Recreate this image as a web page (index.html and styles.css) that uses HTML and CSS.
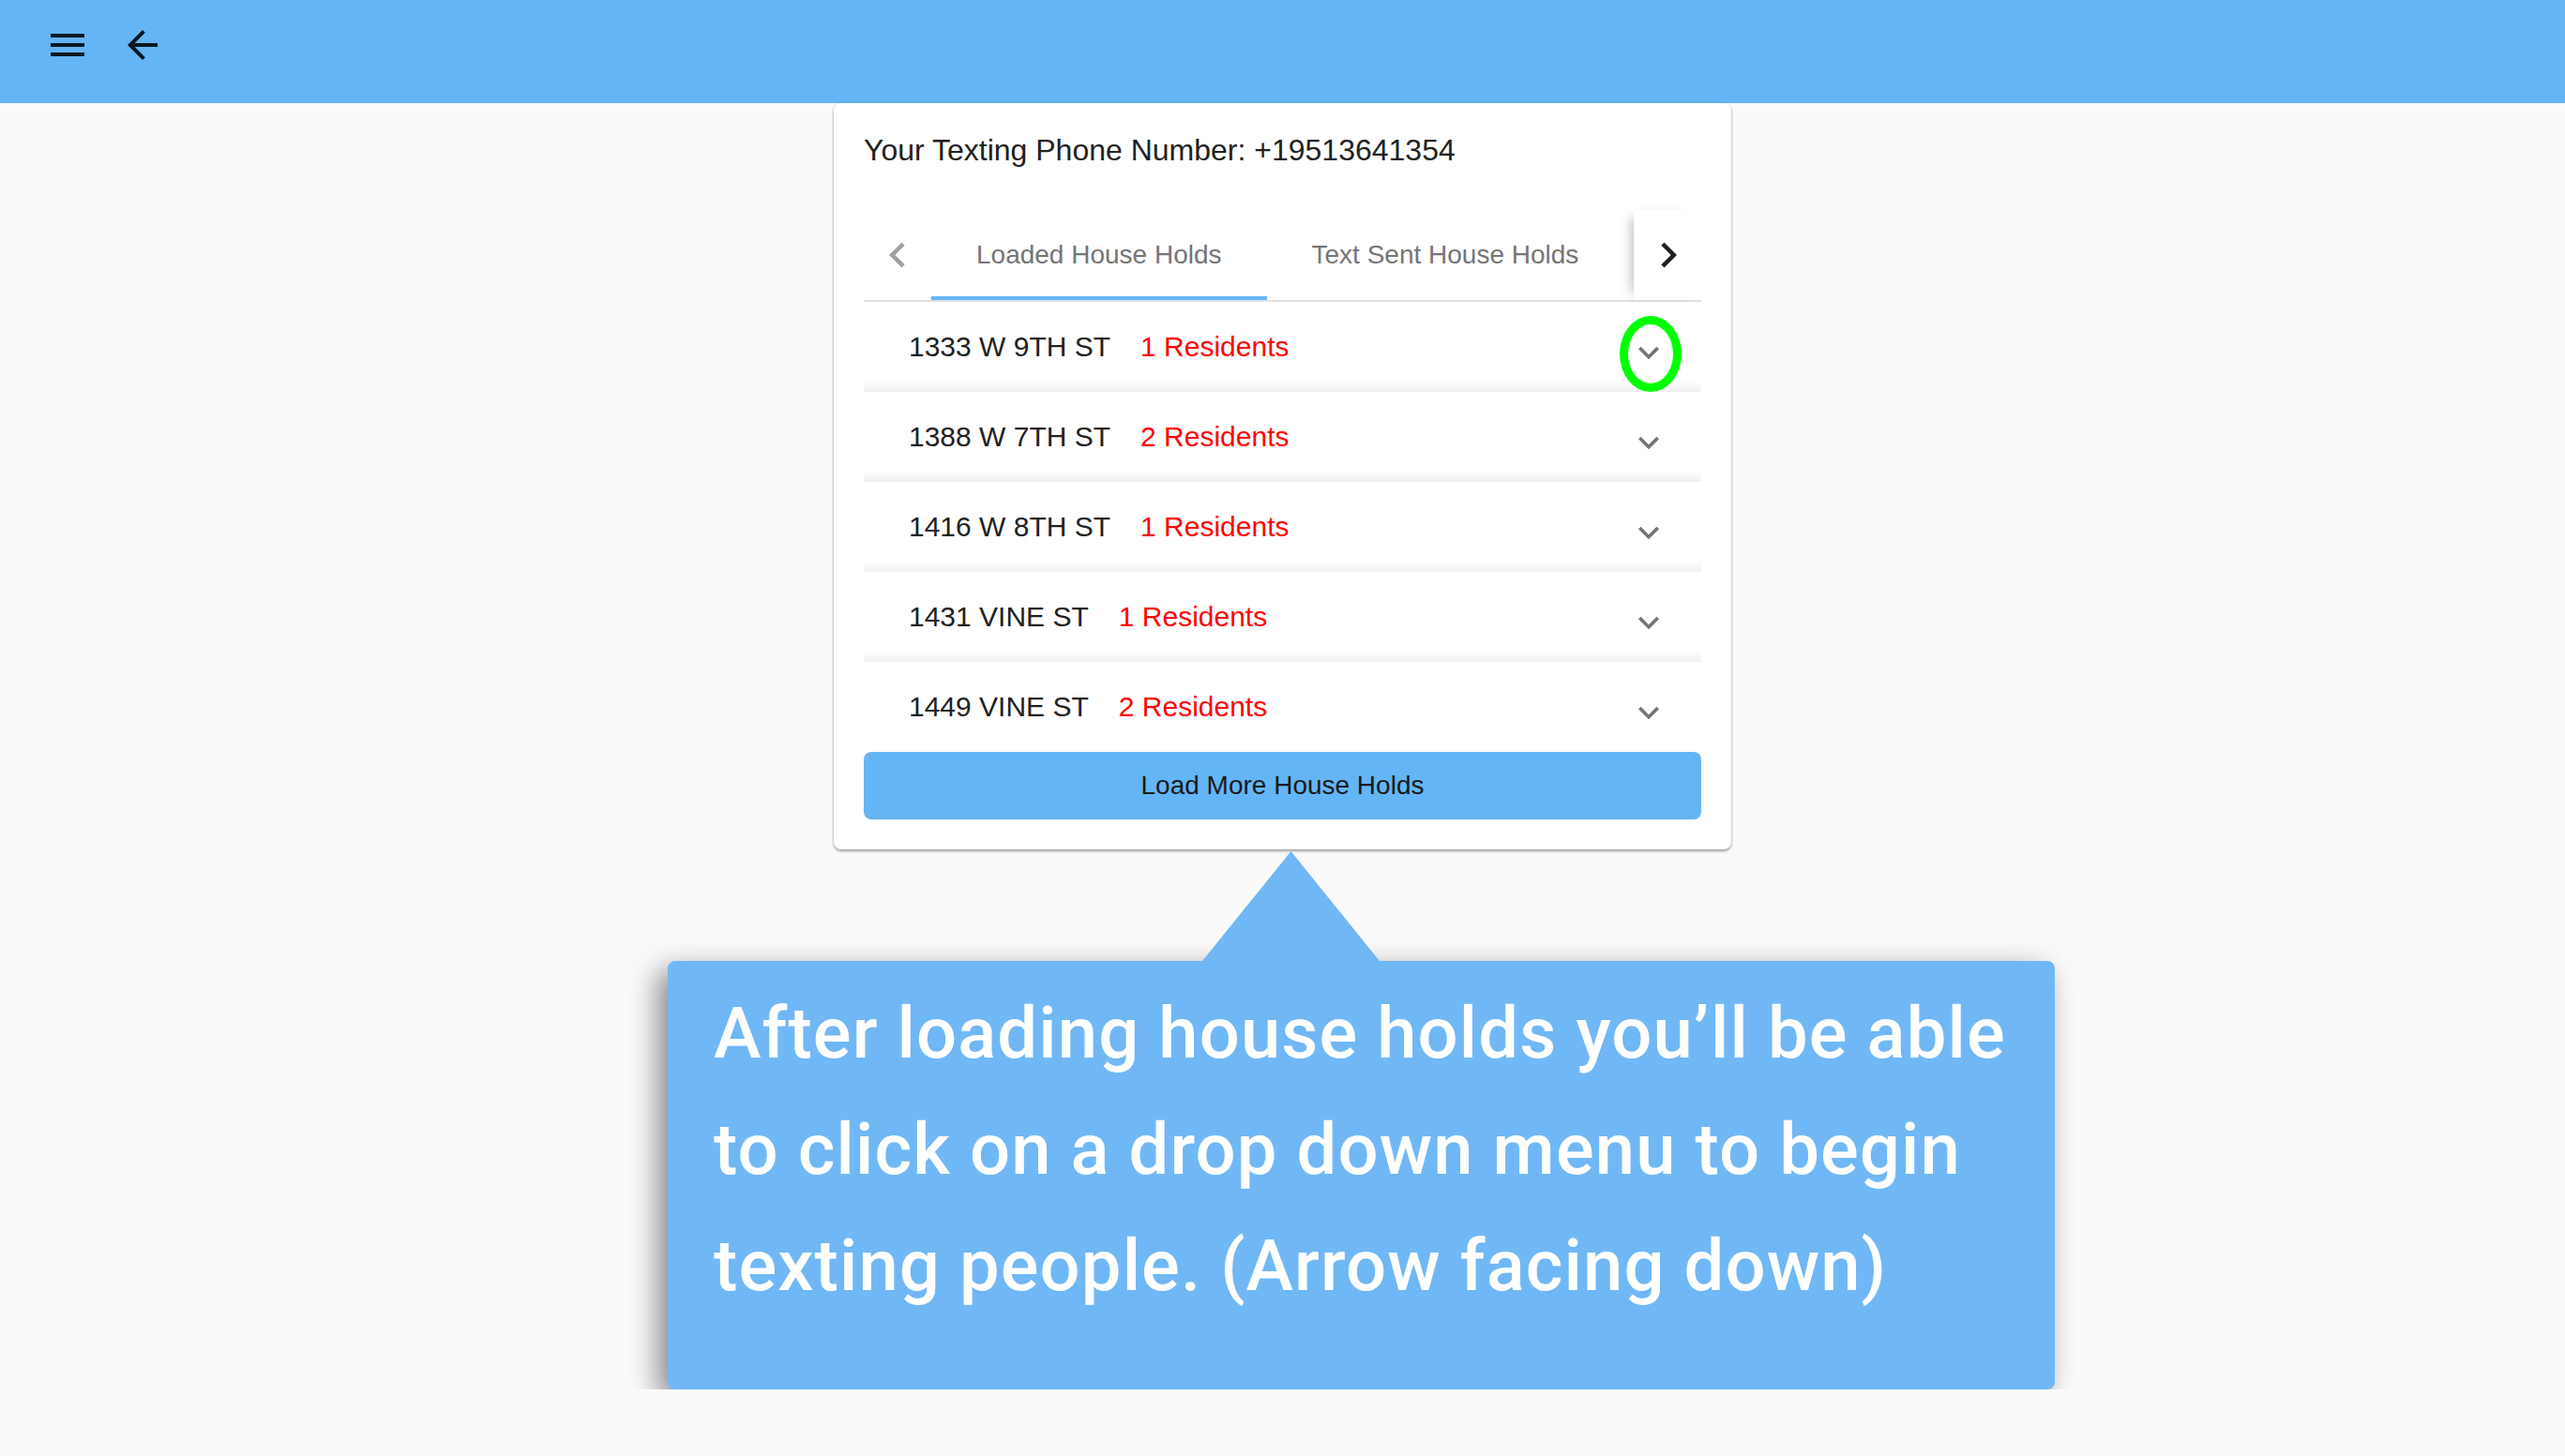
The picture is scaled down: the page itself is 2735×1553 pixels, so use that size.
FILE: index.html
```html
<!DOCTYPE html>
<html lang="en">
<head>
<meta charset="utf-8">
<title>Texting</title>
<link rel="stylesheet" href="styles.css">
</head>
<body>
<header class="appbar">
  <button class="icon-btn" aria-label="Menu">
    <svg viewBox="0 0 24 24"><path d="M3 18h18v-2H3v2zm0-5h18v-2H3v2zm0-7v2h18V6H3z"/></svg>
  </button>
  <button class="icon-btn" aria-label="Back">
    <svg viewBox="0 0 24 24"><path d="M20 11H7.83l5.59-5.59L12 4l-8 8 8 8 1.41-1.41L7.83 13H20v-2z"/></svg>
  </button>
</header>
<main class="page">
  <section class="card">
    <p class="phone">Your Texting Phone Number: +19513641354</p>
    <div class="tabs">
      <div class="scroll-btn disabled">
        <svg viewBox="0 0 24 24"><path d="M15.41 16.59L10.83 12l4.58-4.59L14 6l-6 6 6 6 1.41-1.41z"/></svg>
      </div>
      <div class="tab-list">
        <div class="tab active">Loaded House Holds</div>
        <div class="tab">Text Sent House Holds</div>
      </div>
      <div class="scroll-btn next">
        <svg viewBox="0 0 24 24"><path d="M10 6L8.59 7.41 13.17 12l-4.58 4.59L10 18l6-6z"/></svg>
      </div>
    </div>
    <ul class="households">
      <li class="household">
        <span class="address">1333 W 9TH ST</span><span class="residents">1 Residents</span>
        <span class="expand"><svg viewBox="0 0 24 24"><path d="M16.59 8.59L12 13.17 7.41 8.59 6 10l6 6 6-6z"/></svg><span class="highlight"></span></span>
      </li>
      <li class="household">
        <span class="address">1388 W 7TH ST</span><span class="residents">2 Residents</span>
        <span class="expand"><svg viewBox="0 0 24 24"><path d="M16.59 8.59L12 13.17 7.41 8.59 6 10l6 6 6-6z"/></svg></span>
      </li>
      <li class="household">
        <span class="address">1416 W 8TH ST</span><span class="residents">1 Residents</span>
        <span class="expand"><svg viewBox="0 0 24 24"><path d="M16.59 8.59L12 13.17 7.41 8.59 6 10l6 6 6-6z"/></svg></span>
      </li>
      <li class="household">
        <span class="address">1431 VINE ST</span><span class="residents">1 Residents</span>
        <span class="expand"><svg viewBox="0 0 24 24"><path d="M16.59 8.59L12 13.17 7.41 8.59 6 10l6 6 6-6z"/></svg></span>
      </li>
      <li class="household">
        <span class="address">1449 VINE ST</span><span class="residents">2 Residents</span>
        <span class="expand"><svg viewBox="0 0 24 24"><path d="M16.59 8.59L12 13.17 7.41 8.59 6 10l6 6 6-6z"/></svg></span>
      </li>
    </ul>
    <button class="load-more">Load More House Holds</button>
  </section>
  <aside class="callout">
    <p class="callout-text">After loading house holds you’ll be able<br>to click on a drop down menu to begin<br>texting people. (Arrow facing down)</p>
  </aside>
</main>
</body>
</html>
```
FILE: styles.css
```css
* {
  box-sizing: border-box;
}

body {
  margin: 0;
  background: #fafafa;
  font-family: "Liberation Sans", Arial, sans-serif;
  color: #212121;
}

.appbar {
  height: 110px;
  background: #64b5f6;
  display: flex;
  align-items: flex-start;
  gap: 32px;
  padding: 24px 0 0 48px;
}

.icon-btn {
  width: 48px;
  height: 48px;
  padding: 0;
  border: 0;
  background: none;
  display: block;
}

.icon-btn svg {
  width: 48px;
  height: 48px;
  display: block;
  fill: #0d1820;
}

.card {
  width: 957px;
  margin: 0 auto;
  background: #fff;
  border-radius: 8px;
  padding: 32px;
  box-shadow: 0 2px 3px rgba(0, 0, 0, 0.35), 0 0 3px rgba(0, 0, 0, 0.1);
}

.phone {
  margin: 0;
  font-size: 32px;
  line-height: 37px;
  color: #212121;
}

.tabs {
  margin-top: 45px;
  height: 98px;
  display: flex;
  border-bottom: 2px solid #e0e0e0;
}

.scroll-btn {
  width: 72px;
  flex: none;
  display: flex;
  align-items: center;
  justify-content: center;
  background: #fff;
}

.scroll-btn svg {
  width: 54px;
  height: 54px;
  display: block;
  fill: #212121;
}

.scroll-btn.disabled svg {
  fill: #a0a0a0;
}

.scroll-btn.next {
  position: relative;
  z-index: 1;
  box-shadow: -10px 0 12px -8px rgba(0, 0, 0, 0.28);
}

.scroll-btn.next svg {
  margin-left: 2px;
}

.tab-list {
  flex: 1;
  display: flex;
  overflow: hidden;
}

.tab {
  flex: none;
  position: relative;
  display: flex;
  align-items: center;
  padding: 0 48px;
  font-size: 28px;
  color: #757575;
  white-space: nowrap;
}

.tab.active::after {
  content: "";
  position: absolute;
  left: 0;
  right: 0;
  bottom: 0;
  height: 4px;
  background: #64b5f6;
}

.households {
  list-style: none;
  margin: 0;
  padding: 0;
}

.household {
  height: 96px;
  display: flex;
  align-items: center;
  padding: 0 34px 0 48px;
  font-size: 30px;
  background: linear-gradient(#fff calc(100% - 12px), #f0f0f0);
}

.household:first-child {
  border-radius: 8px 8px 0 0;
}

.household:last-child {
  background: #fff;
  border-radius: 0 0 8px 8px;
}

.address {
  color: #212121;
}

.residents {
  color: #ff0000;
  margin-left: 32px;
}

.expand {
  position: relative;
  margin-left: auto;
  margin-top: 11px;
  width: 44px;
  height: 44px;
}

.expand svg {
  width: 44px;
  height: 44px;
  display: block;
  fill: #757575;
}

.highlight {
  position: absolute;
  left: -9px;
  top: -17px;
  width: 66px;
  height: 81px;
  border: 9px solid #00ff00;
  border-radius: 50%;
}

.load-more {
  display: block;
  width: 100%;
  height: 72px;
  border: 0;
  border-radius: 8px;
  background: #64b5f6;
  font-family: "Liberation Sans", Arial, sans-serif;
  font-size: 28px;
  color: #1a1a1a;
}

.callout {
  position: relative;
  width: 1479px;
  height: 457px;
  margin: 119px 0 0 712px;
  padding: 15px 0 0 49px;
  background: #70b8f5;
  border-radius: 8px;
  box-shadow: -10px 10px 30px rgba(20, 20, 40, 0.5);
}

.callout::before {
  content: "";
  position: absolute;
  left: 570px;
  top: -117px;
  width: 189px;
  height: 117px;
  background: #70b8f5;
  clip-path: polygon(50% 0, 100% 100%, 0 100%);
}

.callout-text {
  margin: 0;
  font-family: Roboto, "Liberation Sans", sans-serif;
  font-size: 76px;
  font-weight: 500;
  line-height: 124px;
  letter-spacing: 1.1px;
  color: #fff;
  white-space: nowrap;
}
```
